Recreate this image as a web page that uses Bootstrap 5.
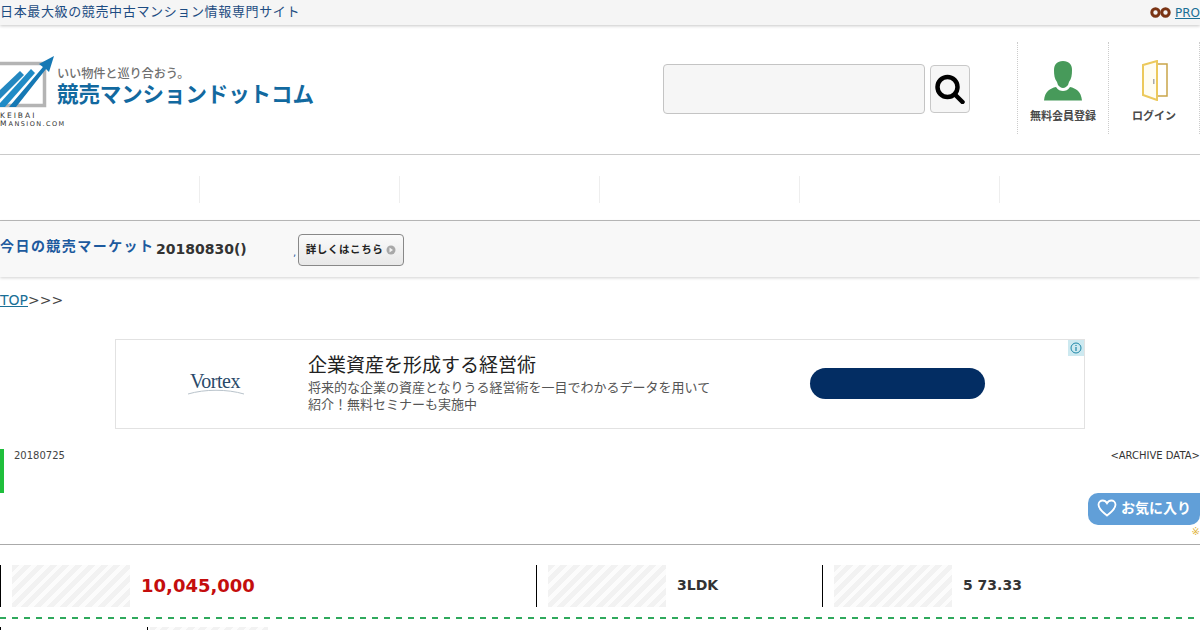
<!DOCTYPE html>
<html lang="ja">
<head>
<meta charset="utf-8">
<title>競売マンションドットコム</title>
<link href="https://cdn.jsdelivr.net/npm/bootstrap@5.3.0/dist/css/bootstrap.min.css" rel="stylesheet">
<style>
html,body{height:630px;overflow:hidden}
body{font-family:"DejaVu Sans","Noto Sans CJK JP",sans-serif;color:#333;background:#fff;font-size:14px}
a{color:#1a6f96}
.topstrip{height:25px;background:#f5f5f5;box-shadow:0 1px 3px rgba(0,0,0,.22);font-size:13px;color:#1d4c82;letter-spacing:.64px;line-height:24px;position:relative}
.topstrip a{font-size:12px;letter-spacing:0}
.masthead{height:130px;border-bottom:1px solid #ccc}
.logo-wrap{width:330px;height:75px;margin-top:31px}
.logo-mark{width:56px}
.logo-words{margin-left:1px}
.logo-copy{font-size:12.2px;font-weight:500;color:#707070;line-height:14px;margin-top:11px;letter-spacing:-.1px;white-space:nowrap}
.logo-name{font-size:21.5px;font-weight:700;color:#12699f;line-height:28px;letter-spacing:-.1px;white-space:nowrap}
.logo-latin{font-family:"DejaVu Sans",sans-serif;font-size:7.5px;color:#333;line-height:8px;letter-spacing:2px;white-space:nowrap}
.logo-small{font-size:6.5px;letter-spacing:1.45px}
.search-area{margin-top:39px;margin-right:47px}
.search-field{width:262px;height:50px;background:#f6f6f6;border:1px solid #c4c4c4;border-radius:4px}
.search-btn{width:40px;height:48px;background:#f6f6f6;border:1px solid #c8c8c8;border-radius:4px;margin-left:5px;margin-top:1px}
.tool-cell{width:91px;height:92px;margin-top:17px;border-left:1px dotted #ccc;font-size:11px;font-weight:700;color:#4a4a4a;text-align:center;padding-top:19px}
.tool-cell svg{display:block;margin:0 auto}
.tool-last{width:92px;border-right:1px dotted #ccc;padding-top:18px}
.gnav{height:66px;border-bottom:1px solid #bbb;box-shadow:0 1px 2px rgba(0,0,0,.14);padding-top:21px}
.gnav-cell{width:200px;height:27px;border-right:1px solid #eee}
.market{height:56px;background:#f8f8f8;box-shadow:0 1px 3px rgba(0,0,0,.18);position:relative}
.market-title{font-size:14px;font-weight:700;color:#1d5a9e;letter-spacing:1.45px;width:156px;white-space:nowrap;line-height:20px;margin-top:15px}
.market-date{font-size:14px;font-weight:700;color:#333;line-height:20px;margin-top:18px;width:137px}
.market-dot{font-size:10px;color:#1d5a9e;width:5px;line-height:14px;margin-top:25px}
.more-btn{width:106px;height:32px;margin-top:13px;background:linear-gradient(#fafafa,#e8e8e8);border:1px solid #888;border-radius:4px;font-size:10.5px;font-weight:700;color:#222;letter-spacing:.6px;white-space:nowrap}
.more-dot{margin-left:3px;flex:none;display:block}
.crumb{height:62px;padding-top:13px;line-height:20px;font-size:14px;color:#444}
.crumb a{color:#1a6f96}
.ad-box{width:970px;height:90px;border:1px solid #e2e2e2;margin-left:115px;position:relative}
.ad-logo{width:192px;padding-left:74px;font-family:"Liberation Serif",serif;font-size:20px;color:#2a4a6a;letter-spacing:-.5px;line-height:20px;margin-top:31px}
.ad-swoosh{width:58px;height:6px;margin-left:-3px;margin-top:-2px;display:block}
.ad-head{font-size:19px;color:#222;line-height:24px;margin-top:13px;white-space:nowrap}
.ad-text{font-size:13px;color:#555;line-height:16.6px;margin-top:3px;width:405px}
.ad-cta{width:175px;height:31px;background:#032d63;border-radius:15.5px;margin-left:97px;margin-top:28px}
.ad-info{position:absolute;top:0;right:0;width:16px;height:16px;background:#cde9f0;display:flex;align-items:center;justify-content:center}
.meta{height:44px;margin-top:20px;border-left:4px solid #1fbf3c;padding-left:10px;font-size:10px;line-height:12px;color:#444;padding-top:1px}
.meta-arch{color:#333}
.fav-zone{height:52px;border-bottom:1px solid #aaa;position:relative}
.fav-btn{position:absolute;top:0;right:0;width:112px;height:32px;background:#619fd8;border-radius:10px 0 10px 10px;color:#fff;font-size:14px;font-weight:700;padding-left:9px;padding-bottom:2px;white-space:nowrap}
.fav-note{position:absolute;top:32px;right:0;font-size:10px;line-height:13px;color:#e0b43c}
.spec-row{height:42px;margin-top:20px}
.spec{height:42px;border-left:1px solid #000;padding-left:11px;font-size:14px;font-weight:700;color:#333}
.spec-a{width:536px}.spec-b{width:286px}.spec-c{flex:1}
.spec-text{margin-bottom:2px}
.hatch{width:118px;height:42px;margin-right:11px;flex:none;background:repeating-linear-gradient(135deg,#f2f2f2 0 5px,#fcfcfc 5px 9px)}
.price{color:#c40d0d;font-size:18px}
.dash{height:2px;margin-top:10px;background:repeating-linear-gradient(90deg,#2fa95c 0 6px,transparent 6px 12px)}
.next-row{height:20px;margin-top:8px}
.next-a{width:148px;border-right:1px solid #000;border-left:1px solid #000;height:10px}
.next-hatch{width:118px;height:10px;margin-left:2px;background:repeating-linear-gradient(135deg,#f2f2f2 0 5px,#fcfcfc 5px 9px)}
</style>
</head>
<body>
<div class="topstrip d-flex justify-content-between">
  <span>日本最大級の競売中古マンション情報専門サイト</span>
  <span class="d-flex align-items-center">
    <svg width="21" height="11" viewBox="0 0 21 11" class="me-1"><circle cx="5.5" cy="5.5" r="3.7" fill="none" stroke="#7a3414" stroke-width="3"/><circle cx="15.5" cy="5.5" r="3.7" fill="none" stroke="#7a3414" stroke-width="3"/></svg><a href="#">PRO</a>
  </span>
</div>

<header class="masthead d-flex justify-content-between">
  <div class="logo-wrap d-flex">
    <div class="logo-mark">
      <svg width="56" height="56" viewBox="0 0 56 56" class="d-block">
        <path d="M0 7.500H44.500V49.500H0" fill="none" stroke="#b4b4b4" stroke-width="3.500"/>
        <path d="M0 34 20 15 24 19 0 43Z" fill="#2387c0"/>
        <path d="M0 47 31 13 35 17 5 51H0Z" fill="#1f8bc6"/>
        <path d="M9 51 43 11 39 8 54 0 49 16 46 13 16 51Z" fill="#1578b4"/>
      </svg>
      <div class="logo-latin">KEIBAI<br>M<span class="logo-small">ANSION.COM</span></div>
    </div>
    <div class="logo-words">
      <div class="logo-copy">いい物件と巡り合おう。</div>
      <div class="logo-name">競売マンションドットコム</div>
    </div>
  </div>
  <div class="d-flex">
    <div class="search-area d-flex align-items-start">
      <div class="search-field"></div>
      <div class="search-btn d-flex align-items-center justify-content-center">
        <svg width="30" height="30" viewBox="0 0 30 30"><circle cx="12.500" cy="13" r="10" fill="none" stroke="#000" stroke-width="4.500"/><path d="M20 20.500 27.500 28" stroke="#000" stroke-width="4.500" stroke-linecap="round"/></svg>
      </div>
    </div>
    <div class="tool-cell">
      <svg width="38" height="40" viewBox="0 0 38 40"><path d="M19 0c6 0 9 3.500 9 9 0 5-.5 9-3 12l-1 3c-1 1.500-3 3-5 3s-4-1.500-5-3l-1-3c-2.500-3-3-7-3-12 0-5.500 3-9 9-9Z" fill="#479a5a"/><path d="M12 26c2 3 4.500 4 7 4s5-1 7-4c6 1.500 11 4 12 13.500H0C1 30 6 27.500 12 26Z" fill="#479a5a"/></svg>
      <div class="mt-2">無料会員登録</div>
    </div>
    <div class="tool-cell tool-last">
      <svg width="30" height="41" viewBox="0 0 30 41"><path d="M16 4h12v32h-9" fill="none" stroke="#c9a54a" stroke-width="1.500"/><path d="M4 5 18 1v39L4 35Z" fill="#fffdf2" stroke="#ecc95c" stroke-width="2"/><rect x="14" y="19" width="1.500" height="5" fill="#aaa"/></svg>
      <div class="mt-2">ログイン</div>
    </div>
  </div>
</header>

<nav class="gnav d-flex"><div class="gnav-cell"></div><div class="gnav-cell"></div><div class="gnav-cell"></div><div class="gnav-cell"></div><div class="gnav-cell"></div></nav>

<section class="market d-flex">
  <div class="market-title">今日の競売マーケット</div>
  <div class="market-date">20180830()</div>
  <div class="market-dot">,</div>
  <div class="more-btn d-flex align-items-center justify-content-center">詳しくはこちら<svg class="more-dot" width="10" height="10" viewBox="0 0 10 10"><circle cx="5" cy="5" r="4.500" fill="#a8a8a8"/><path d="M3.500 2.500 7 5 3.500 7.500Z" fill="#f2f2f2"/></svg></div>
</section>

<div class="crumb"><a href="#">TOP</a>&gt;&gt;&gt;</div>

<section class="ad-box d-flex">
  <div class="ad-logo">Vortex
    <svg class="ad-swoosh" viewBox="0 0 58 6"><path d="M1 5C18 0 40 0 57 5" fill="none" stroke="#b9c3cb" stroke-width="1"/></svg>
  </div>
  <div>
    <div class="ad-head">企業資産を形成する経営術</div>
    <div class="ad-text">将来的な企業の資産となりうる経営術を一目でわかるデータを用いて紹介！無料セミナーも実施中</div>
  </div>
  <div class="ad-cta"></div>
  <div class="ad-info"><svg width="12" height="12" viewBox="0 0 12 12"><circle cx="6" cy="6" r="5" fill="none" stroke="#1e88a8"/><path d="M6 5v4M6 3v1" stroke="#1e88a8" stroke-width="1.200"/></svg></div>
</section>

<div class="meta d-flex justify-content-between">
  <span>20180725</span><span class="meta-arch">&lt;ARCHIVE DATA&gt;</span>
</div>

<div class="fav-zone">
  <div class="fav-btn d-flex align-items-center">
    <svg width="20" height="18" viewBox="0 0 20 18" class="me-1"><path d="M10 16.500C4 12 1.500 9 1.500 5.800 1.500 3.200 3.500 1.500 5.700 1.500 7.500 1.500 9 2.500 10 4.200 11 2.500 12.500 1.500 14.300 1.500 16.500 1.500 18.500 3.200 18.500 5.800 18.500 9 16 12 10 16.500Z" fill="none" stroke="#fff" stroke-width="1.800"/></svg>お気に入り
  </div>
  <div class="fav-note">※</div>
</div>

<div class="spec-row d-flex">
  <div class="spec spec-a d-flex align-items-center"><span class="hatch"></span><span class="price spec-text">10,045,000</span></div>
  <div class="spec spec-b d-flex align-items-center"><span class="hatch"></span><span class="spec-text">3LDK</span></div>
  <div class="spec spec-c d-flex align-items-center"><span class="hatch"></span><span class="spec-text">5 73.33</span></div>
</div>
<div class="dash"></div>
<div class="next-row d-flex"><div class="next-a"></div><div class="next-hatch"></div></div>
</body>
</html>
